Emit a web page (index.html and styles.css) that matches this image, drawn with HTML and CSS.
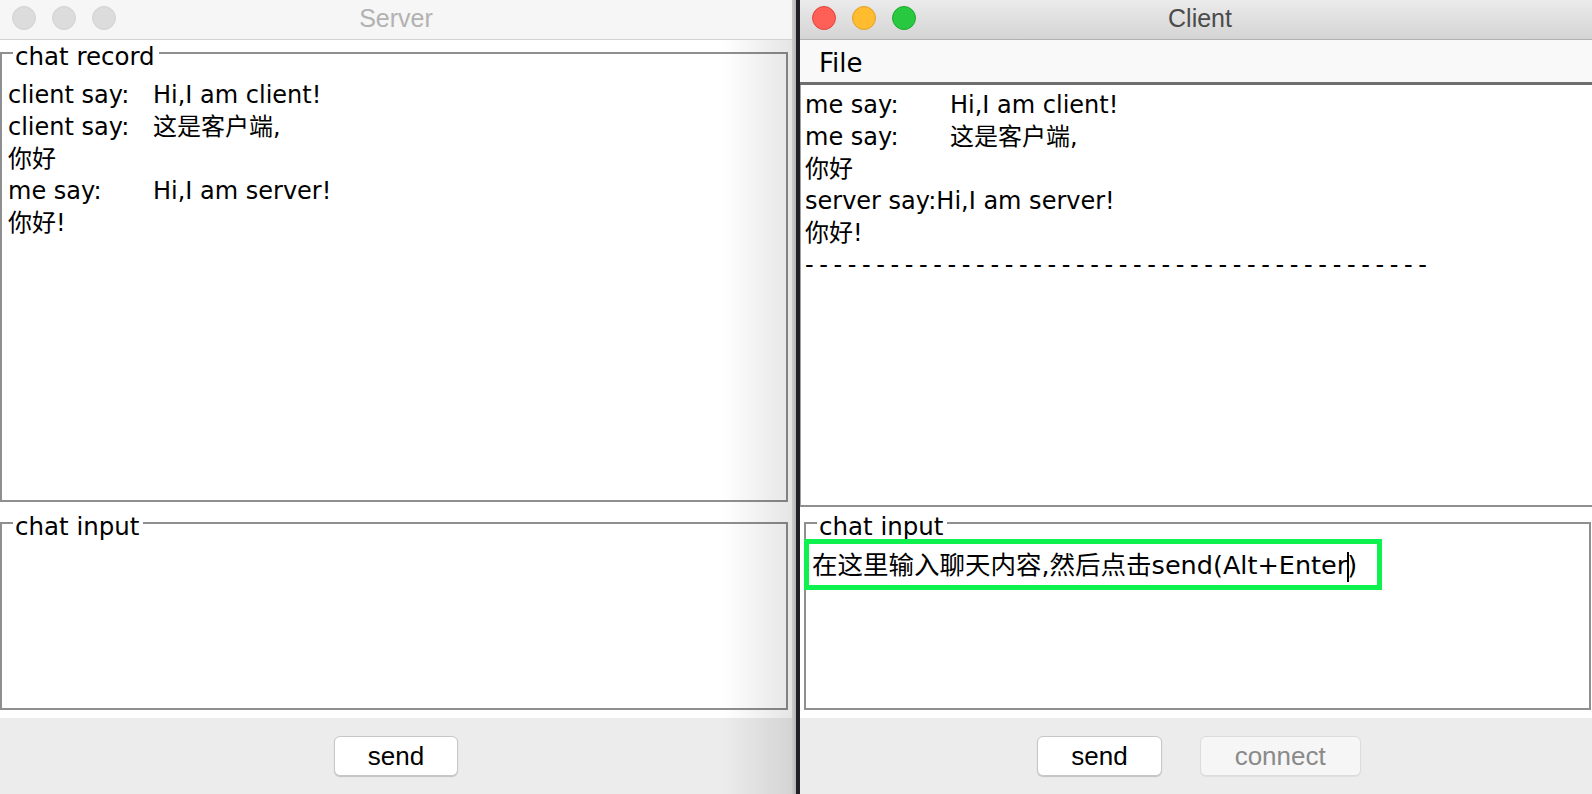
FILE: index.html
```html
<!DOCTYPE html>
<html>
<head>
<meta charset="utf-8">
<link rel="stylesheet" href="styles.css">
</head>
<body>
<div class="window server">
  <div class="titlebar inactive">
    <div class="lights">
      <span class="light"></span><span class="light"></span><span class="light"></span>
    </div>
    <div class="title">Server</div>
    <div></div>
  </div>
  <div class="content server-content">
    <fieldset class="tb record">
      <legend>chat record</legend>
      <div class="text">
        <div class="line"><span class="who">client say:</span>Hi,I am client!</div>
        <div class="line"><span class="who">client say:</span>这是客户端,</div>
        <div class="line">你好</div>
        <div class="line"><span class="who">me say:</span>Hi,I am server!</div>
        <div class="line">你好!</div>
      </div>
    </fieldset>
    <fieldset class="tb input">
      <legend>chat input</legend>
      <div class="text"></div>
    </fieldset>
  </div>
  <div class="buttonbar">
    <button class="btn">send</button>
  </div>
  <div class="shade"></div>
</div>
<div class="divider"></div>
<div class="window client">
  <div class="titlebar active">
    <div class="lights">
      <span class="light red"></span><span class="light yellow"></span><span class="light green"></span>
    </div>
    <div class="title">Client</div>
    <div></div>
  </div>
  <div class="menubar"><span class="menu">File</span></div>
  <div class="content client-content">
    <div class="record-plain">
      <div class="line"><span class="who">me say:</span>Hi,I am client!</div>
      <div class="line"><span class="who">me say:</span>这是客户端,</div>
      <div class="line">你好</div>
      <div class="line">server say:Hi,I am server!</div>
      <div class="line">你好!</div>
      <div class="line dashes">--------------------------------------------</div>
    </div>
    <fieldset class="tb input client-input">
      <legend>chat input</legend>
      <div class="text">
        <div class="highlight"></div>
        <div class="line typed">在这里输入聊天内容,然后点击send(Alt+Enter<span class="caret"></span>)</div>
      </div>
    </fieldset>
  </div>
  <div class="buttonbar">
    <button class="btn">send</button>
    <button class="btn disabled">connect</button>
  </div>
</div>
</body>
</html>
```
FILE: styles.css
```css
* { box-sizing: border-box; }
html, body { margin: 0; padding: 0; }
body {
  width: 1592px;
  height: 794px;
  overflow: hidden;
  display: flex;
  background: #1d1d22;
  font-family: "DejaVu Sans", "Noto Sans CJK SC", sans-serif;
  font-size: 24px;
  color: #000;
}
.window {
  position: relative;
  height: 794px;
  display: flex;
  flex-direction: column;
  background: #fff;
  overflow: hidden;
}
.server { width: 792px; }
.client { flex: 1; }
.divider {
  width: 8px;
  background: linear-gradient(to right, #cfcfcf 0, #b4b4b4 50%, #202027 50%, #202027 100%);
}
.titlebar {
  height: 40px;
  display: grid;
  grid-template-columns: 1fr auto 1fr;
  align-items: start;
  border-bottom: 1px solid #d2d2d2;
  font-family: "Liberation Sans", sans-serif;
}
.titlebar.inactive { background: #f6f6f6; }
.titlebar.active {
  background: linear-gradient(to bottom, #ebebeb, #d4d4d4);
  border-bottom-color: #b1b1b1;
}
.lights {
  display: flex;
  gap: 16px;
  padding: 6px 0 0 12px;
}
.light {
  width: 24px;
  height: 24px;
  border-radius: 50%;
  background: #dcdcdc;
  border: 1px solid #d2d2d2;
}
.light.red { background: #fe5f57; border-color: #e2463f; }
.light.yellow { background: #febc2e; border-color: #e0a029; }
.light.green { background: #28c840; border-color: #1eaa2f; }
.title {
  font-size: 25px;
  line-height: 37px;
}
.inactive .title { color: #b2b2b2; }
.active .title { color: #4b4b4b; padding-left: 8px; }

.menubar {
  height: 45px;
  background: #f9f9f9;
  border-bottom: 3px solid #6f6f6f;
  padding: 4px 0 0 19px;
  display: flex;
  align-items: center;
}
.menu { font-size: 26px; line-height: 40px; }

.content {
  flex: 1;
  display: flex;
  flex-direction: column;
  gap: 8px;
  padding-bottom: 8px;
}
.server-content { padding-right: 4px; }
.client-content { gap: 3px; }

.tb {
  margin: 0;
  padding: 0;
  min-width: 0;
  border: 2px solid #8f8f8f;
}
.tb legend {
  margin-left: 11px;
  padding: 9px 4px 0 2px;
  line-height: 16px;
  font-size: 24.5px;
}
.record { height: 462px; }
.input { height: 200px; }
.client-input { margin: 0 1px 0 4px; }

.text {
  position: relative;
  padding: 14px 6px 0;
}
.line {
  line-height: 32px;
  white-space: nowrap;
}
.who {
  display: inline-block;
  min-width: 145px;
}
.record-plain {
  height: 422px;
  border-left: 1px solid #a0a0a0;
  border-bottom: 2px solid #8f8f8f;
  padding: 4px 4px 0;
}
.dashes { letter-spacing: 5.6px; }
.typed { font-size: 25.5px; }

.highlight {
  position: absolute;
  left: -2px;
  top: 4px;
  width: 578px;
  height: 51px;
  border: 5px solid #0ef24f;
}
.caret {
  display: inline-block;
  width: 0;
  height: 30px;
  vertical-align: middle;
  border-left: 2px solid #000;
  margin-right: -2px;
}

.buttonbar {
  height: 76px;
  flex: none;
  background: #ececec;
  display: flex;
  justify-content: center;
  align-items: center;
  gap: 38px;
}
.client .buttonbar { padding-left: 6px; }
.btn {
  height: 40px;
  padding: 0 33px;
  font-family: "Liberation Sans", sans-serif;
  font-size: 26px;
  color: #000;
  background: #fff;
  border: 1px solid #c6c6c6;
  border-radius: 6px;
  box-shadow: 0 1px 1px rgba(0, 0, 0, 0.18);
}
.btn.disabled {
  padding: 0 34px;
  background: #f6f6f6;
  color: #8a8a8a;
  border-color: #dcdcdc;
  box-shadow: 0 1px 1px rgba(0, 0, 0, 0.06);
}
.shade {
  position: absolute;
  top: 40px;
  right: 0;
  bottom: 0;
  width: 70px;
  background: linear-gradient(to right, rgba(0, 0, 0, 0), rgba(0, 0, 0, 0.1));
  pointer-events: none;
}
```
